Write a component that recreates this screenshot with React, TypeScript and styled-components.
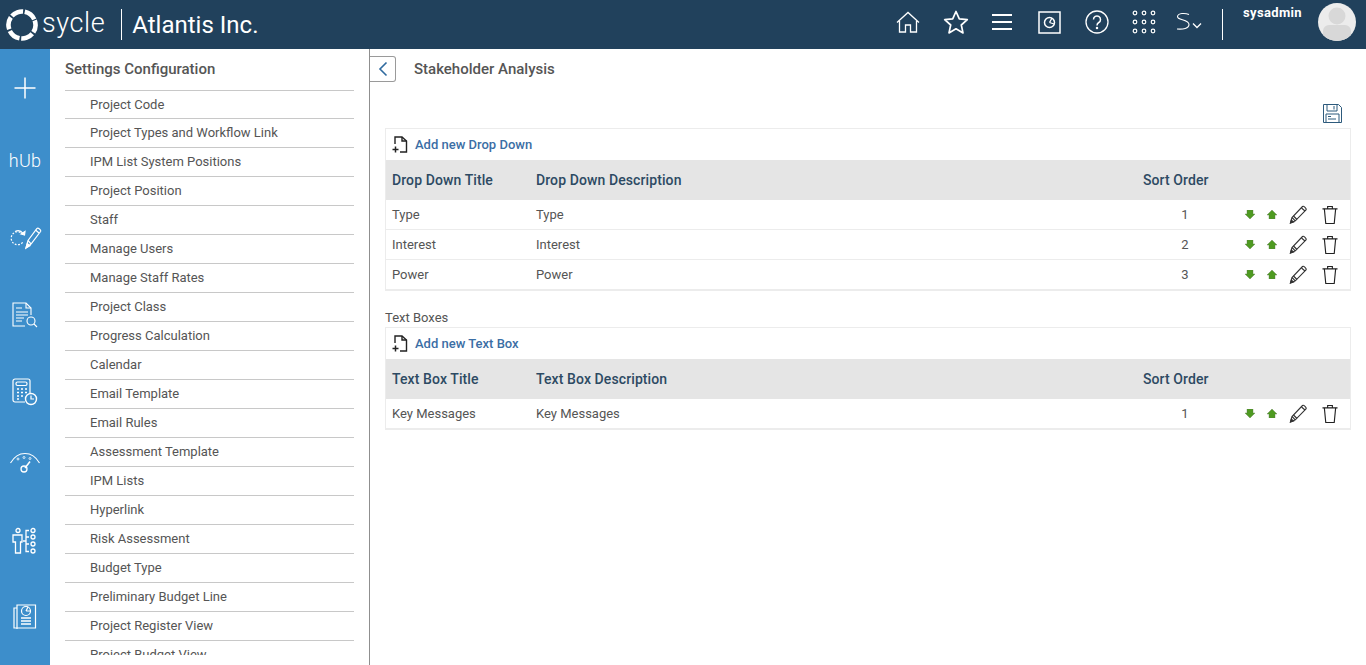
import React from "react";
import styled, { createGlobalStyle } from "styled-components";

const Global = createGlobalStyle`
  html, body { margin: 0; padding: 0; height: 100%; overflow: hidden; background: #fff; }
  body { font-family: Roboto, "Liberation Sans", sans-serif; }
  #root { height: 100%; }
`;

const Page = styled.div`
  width: 1366px;
  height: 665px;
  display: flex;
  flex-direction: column;
  overflow: hidden;
`;
const Header = styled.header`
  height: 49px;
  flex: none;
  background: #21415c;
  display: flex;
  align-items: center;
  color: #fff;
`;
const Brand = styled.div`
  display: flex;
  align-items: center;
  padding-left: 6px;
`;
const LogoText = styled.span`
  font-size: 27px;
  font-weight: 300;
  letter-spacing: 0.6px;
  margin: -3px 0 0 4px;
`;
const BrandRule = styled.span`
  width: 1px;
  height: 31px;
  background: #fff;
  margin: 0 10px 0 16px;
`;
const Company = styled.span`
  font-size: 24px;
  font-weight: 400;
  margin-top: 1px;
`;
const HeaderIcons = styled.div`
  margin-left: auto;
  display: flex;
  align-items: center;
  height: 100%;
`;
const HeaderIcon = styled.span<{ $w: number; $mr: number }>`
  width: ${(p) => p.$w}px;
  margin-right: ${(p) => p.$mr}px;
  margin-bottom: 5px;
  display: flex;
  justify-content: center;
  align-items: center;
`;
const HeaderRule = styled.span`
  width: 1px;
  height: 31px;
  background: #fff;
  align-self: flex-start;
  margin: 9px 20px 0 0;
`;
const UserName = styled.span`
  font-size: 13px;
  font-weight: 700;
  letter-spacing: 0.35px;
  align-self: flex-start;
  margin-top: 5px;
  width: 75px;
`;
const Avatar = styled.span`
  width: 38px;
  height: 38px;
  border-radius: 50%;
  background: #ececec;
  overflow: hidden;
  margin-right: 10px;
  align-self: flex-start;
  margin-top: 3px;
  display: block;
`;
const Body = styled.div`
  flex: 1;
  display: flex;
  min-height: 0;
`;
const Rail = styled.nav`
  width: 50px;
  flex: none;
  background: #3d8ecb;
  display: flex;
  flex-direction: column;
  align-items: center;
  padding-top: 24px;
`;
const RailSlot = styled.div<{ $h: number }>`
  height: ${(p) => p.$h}px;
  flex: none;
`;
const RailIcon = styled.div`
  height: 30px;
  display: flex;
  justify-content: center;
  align-items: center;
`;
const HubText = styled.span`
  color: #fff;
  font-size: 18px;
  font-weight: 300;
  letter-spacing: 0.3px;
  line-height: 20px;
`;
const Sidebar = styled.aside`
  width: 320px;
  box-sizing: border-box;
  flex: none;
  border-right: 1px solid #8f8f8f;
  padding: 0 15px;
  overflow: hidden;
`;
const SideTitle = styled.div`
  font-size: 15px;
  font-weight: 500;
  color: #555;
  line-height: 40px;
  border-bottom: 1px solid #c8c8c8;
  box-sizing: border-box;
  height: 42px;
`;
const SideList = styled.div`
  height: 564px;
  overflow: hidden;
`;
const SideItem = styled.div`
  height: 29px;
  box-sizing: border-box;
  border-bottom: 1px solid #c8c8c8;
  padding-left: 25px;
  font-size: 13px;
  color: #555;
  line-height: 27px;
  white-space: nowrap;
  &:first-child { height: 28px; }
`;
const Main = styled.main`
  flex: 1;
  min-width: 0;
  display: flex;
  flex-direction: column;
  padding-right: 15px;
`;
const TitleBar = styled.div`
  display: flex;
  align-items: center;
  height: 26px;
  margin-top: 7px;
`;
const BackButton = styled.button`
  width: 26px;
  height: 26px;
  box-sizing: border-box;
  padding: 0;
  background: #fff;
  border: 1px solid #9a9a9a;
  border-left: none;
  border-radius: 0 3px 3px 0;
  display: flex;
  align-items: center;
  justify-content: center;
  margin-right: 18px;
`;
const PageTitle = styled.h1`
  margin: 0;
  font-size: 15px;
  font-weight: 500;
  color: #555;
`;
const SaveRow = styled.div`
  display: flex;
  justify-content: flex-end;
  height: 20px;
  margin: 22px 0 3px;
  padding-right: 9px;
`;
const Panel = styled.section`
  margin: 1px 0 0 15px;
  border: 1px solid #ececec;
  border-bottom-width: 2px;
`;
const AddRow = styled.div`
  height: 31px;
  display: flex;
  align-items: center;
  padding-left: 6px;
  gap: 7px;
  font-size: 13px;
  font-weight: 500;
  color: #3b6ea5;
`;
const grid = `
  display: grid;
  grid-template-columns: 144px 1fr 100px 114px;
`;
const HeadRow = styled.div`
  ${grid}
  height: 40px;
  box-sizing: border-box;
  padding-bottom: 1px;
  background: #e5e5e5;
  align-items: center;
  padding-left: 6px;
  font-size: 14px;
  font-weight: 500;
  letter-spacing: 0.1px;
  color: #2d4a63;
`;
const HeadSort = styled.span`
  padding-left: 7px;
  white-space: nowrap;
`;
const Row = styled.div`
  ${grid}
  height: 30px;
  box-sizing: border-box;
  border-bottom: 1px solid #ececec;
  align-items: center;
  padding-left: 6px;
  font-size: 13px;
  color: #555;
  &:last-child { height: 29px; border-bottom: none; }
`;
const SortCell = styled.span`
  text-align: center;
  margin-left: 7px;
  width: 84px;
`;
const Actions = styled.span`
  display: flex;
  align-items: center;
  padding-left: 9px;
`;
const ArrowSlot = styled.span<{ $w: number }>`
  width: ${(p) => p.$w}px;
  display: flex;
  align-items: center;
`;
const SectionLabel = styled.div`
  margin: 19px 0 0 15px;
  font-size: 13px;
  color: #555;
  height: 16px;
  line-height: 16px;
`;

const W = { fill: "none", stroke: "#fff", strokeWidth: 1.3 } as const;

const LogoMark = () => (
  <svg width="32" height="34" viewBox="0 0 32 34">
    <circle
      cx="16"
      cy="17"
      r="13.5"
      fill="none"
      stroke="#fff"
      strokeWidth="4.6"
      strokeDasharray="12.4 1.74"
      transform="rotate(-20 16 17)"
    />
  </svg>
);
const Home = () => (
  <svg width="24" height="22" viewBox="0 0 24 22" {...W}>
    <path d="M1 11.5 12 1.5l11 10M3.5 10v11h6v-7h5v7h6V10" />
  </svg>
);
const Star = () => (
  <svg width="26" height="24" viewBox="0 0 26 24" {...W} strokeWidth="1.7">
    <path d="M13 1.500l3.300 7.300 8 .9-6 5.300 1.700 7.900-7-4.100-7 4.100 1.700-7.900-6-5.300 8-.9z" strokeLinejoin="round" />
  </svg>
);
const Menu = () => (
  <svg width="22" height="18" viewBox="0 0 22 18" stroke="#fff" strokeWidth="2">
    <path d="M1 2h20M1 9h20M1 16h20" />
  </svg>
);
const Dash = () => (
  <svg width="23" height="23" viewBox="0 0 23 23" fill="none" stroke="#fff">
    <rect x="1" y="1" width="21" height="21" strokeWidth="1.500" />
    <circle cx="11.500" cy="11.500" r="5" strokeWidth="1.500" />
    <path d="M11.500 11.500 14 7M11.500 11.500l4.500 1.500" strokeWidth="1.300" />
  </svg>
);
const Help = () => (
  <svg width="24" height="24" viewBox="0 0 24 24" fill="none" stroke="#fff" strokeWidth="1.300">
    <circle cx="12" cy="12" r="11" />
    <path d="M8.500 9.500a3.500 3.500 0 1 1 5.300 3c-1.300.8-1.800 1.300-1.800 3" strokeWidth="1.500" />
    <circle cx="12" cy="18" r=".6" fill="#fff" />
  </svg>
);
const Apps = () => (
  <svg width="24" height="24" viewBox="0 0 24 24" fill="none" stroke="#fff" strokeWidth="1.200">
    {[3, 12, 21].flatMap((y) =>
      [3, 12, 21].map((x) => <circle key={`${x}-${y}`} cx={x} cy={y} r="1.800" />)
    )}
  </svg>
);
const Skin = () => (
  <svg width="28" height="20" viewBox="0 0 28 20" fill="none" stroke="#fff" strokeWidth="1.100">
    <path d="M13 2.500C9 .8 2 1 1.500 4.500 1 8.500 13 7 13 12.500c0 4-6 5-12 4.500" />
    <path d="M17 11.500l4 4 4-4" strokeWidth="1.300" />
  </svg>
);
const Person = () => (
  <svg width="38" height="38" viewBox="0 0 38 38">
    <circle cx="19" cy="13" r="8.500" fill="#d8d8d8" />
    <rect x="5" y="22" width="28" height="16" rx="6" fill="#d8d8d8" />
  </svg>
);

const Plus = () => (
  <svg width="24" height="24" viewBox="0 0 24 24" stroke="#fff" strokeWidth="1.500">
    <path d="M12 1.500v21M1.500 12h21" />
  </svg>
);
const Cycle = () => (
  <svg width="34" height="24" viewBox="0 0 34 24" fill="none" stroke="#fff" strokeWidth="1.200">
    <path d="M15 8.500A6.500 6.500 0 1 0 15 16" strokeDasharray="1.800 1.500" />
    <path d="M7 5.500c3-1.500 6-1 8 2" />
    <path d="M13 8l3.500 1L17 5.500z" fill="#fff" />
    <path d="M18 22l2-7.500L29 2.500c1-1 4.300 1.200 3.700 2.800L23 18z" />
    <path d="M20 14.500l3 3.500M27.500 4l3.500 3" />
    <path d="M18 22l1.300-4.500 2.700 2.200z" fill="#fff" />
  </svg>
);
const DocSearch = () => (
  <svg width="26" height="26" viewBox="0 0 26 26" fill="none" stroke="#fff" strokeWidth="1.100">
    <path d="M19 13V6l-5-5H1v23h12" />
    <path d="M14 1v5h5" />
    <path d="M4 6h6M4 10h12M4 13h12M4 16h8M4 19h6" />
    <circle cx="19" cy="19" r="4" />
    <path d="M22 22l3 3" />
  </svg>
);
const Calc = () => (
  <svg width="26" height="28" viewBox="0 0 26 28" fill="none" stroke="#fff" strokeWidth="1.200">
    <path d="M13 24H3a2 2 0 0 1-2-2V3a2 2 0 0 1 2-2h13a2 2 0 0 1 2 2v12" />
    <rect x="4" y="4" width="11" height="3.500" rx="1.500" />
    <path d="M5 11h2M9 11h2M13 11h2M5 14.500h2M9 14.500h2M13 14.500h2M5 18h2M9 18h2M5 21h2" strokeWidth="1.400" />
    <circle cx="19" cy="21" r="5.500" strokeWidth="1.400" />
    <path d="M19 17.500V21h3" />
  </svg>
);
const Gauge = () => (
  <svg width="30" height="21" viewBox="0 0 30 21" fill="none" stroke="#fff" strokeWidth="1.100">
    <path d="M.5 11C4 5 9 1.500 15 1.500S26 5 29.500 11" />
    <circle cx="8" cy="7" r="1" strokeWidth=".8" /><circle cx="14" cy="5.500" r="1" strokeWidth=".8" /><circle cx="20" cy="6.500" r="1" strokeWidth=".8" />
    <circle cx="14" cy="17" r="3" strokeWidth="1.300" />
    <path d="M15 16l5-6.500" strokeWidth="1.500" />
  </svg>
);
const Org = () => (
  <svg width="26" height="28" viewBox="0 0 26 28" fill="none" stroke="#fff" strokeWidth="1.300">
    <circle cx="6" cy="3.500" r="2" />
    <path d="M1 8h9v7H8.500v11h-5V15H1z" />
    <path d="M11 14h3M17 3.500h-3v21h3M14 10h3M14 17h3" />
    <circle cx="21" cy="3.500" r="2" /><circle cx="21" cy="10" r="2" /><circle cx="21" cy="17" r="2" /><circle cx="21" cy="24" r="2" />
  </svg>
);
const Report = () => (
  <svg width="24" height="28" viewBox="0 0 24 28" fill="none" stroke="#fff" strokeWidth="1.200">
    <path d="M4 26V2h18.500v23H1V5h3" />
    <circle cx="13" cy="8" r="4.500" />
    <path d="M13 8l2-4M13 8h4.500" />
    <path d="M8 15h10M8 18h10M8 21h10" strokeWidth="1.500" />
  </svg>
);

const Chevron = () => (
  <svg width="12" height="16" viewBox="0 0 12 16" fill="none" stroke="#2f6a9f" strokeWidth="1.600">
    <path d="M9.500 1.500 3 8l6.500 6.500" />
  </svg>
);
const Save = () => (
  <svg width="19" height="19" viewBox="0 0 19 19" fill="none" stroke="#2d5a7c" strokeWidth="1">
    <path d="M.5.500h15l3 3v15H.5z" />
    <path d="M4 .5v6.500h10V.5M11 2v3.500" />
    <path d="M3 18.500V10h13v8.500M5 12.500h3M5 15h8" />
  </svg>
);
const AddFile = () => (
  <svg width="16" height="17" viewBox="0 0 16 17" fill="none" stroke="#222" strokeWidth="1.400">
    <path d="M3 8V1h7l4.500 4v11H8" />
    <path d="M10 1v4h4.500" />
    <path d="M3.500 10.500v6M.5 13.500h6" strokeWidth="1.500" />
  </svg>
);
const Down = () => (
  <svg width="10" height="9" viewBox="0 0 10 9">
    <path d="M2 0h6v4h2L5 9 0 4h2z" fill="#4e9a21" stroke="#5d7a4a" strokeWidth=".4" />
  </svg>
);
const Up = () => (
  <svg width="10" height="9" viewBox="0 0 10 9">
    <path d="M2 9h6V5h2L5 0 0 5h2z" fill="#4e9a21" stroke="#5d7a4a" strokeWidth=".4" />
  </svg>
);
const Pencil = () => (
  <svg width="19" height="19" viewBox="0 0 18 19" fill="none" stroke="#333" strokeWidth="1.100">
    <path d="M1 18l1.500-5.500L13 1.500c1-1 4.500 2 3.500 3.500L5.800 15.800z" />
    <path d="M2.500 12.500l3.300 3.300M4 11l3.500 3.500M12 3l3.500 3" />
    <path d="M1 18l.8-3 2.200 2z" fill="#333" />
  </svg>
);
const Trash = () => (
  <svg width="16" height="20" viewBox="0 0 17 20" fill="none" stroke="#222" strokeWidth="1.200">
    <path d="M.5 3.500h16M6 3.500V1h5v2.500" />
    <path d="M2.500 3.500 4 19h9l1.500-15.500" />
  </svg>
);

const menu = [
  "Project Code", "Project Types and Workflow Link", "IPM List System Positions", "Project Position",
  "Staff", "Manage Users", "Manage Staff Rates", "Project Class", "Progress Calculation", "Calendar",
  "Email Template", "Email Rules", "Assessment Template", "IPM Lists", "Hyperlink", "Risk Assessment",
  "Budget Type", "Preliminary Budget Line", "Project Register View", "Project Budget View",
];
const rail = [
  { h: 72.5, icon: <Plus /> },
  { h: 77, icon: <HubText>hUb</HubText> },
  { h: 77.5, icon: <Cycle /> },
  { h: 76.5, icon: <DocSearch /> },
  { h: 71, icon: <Calc /> },
  { h: 78, icon: <Gauge /> },
  { h: 76, icon: <Org /> },
  { h: 50, icon: <Report /> },
];

type TableProps = { add: string; first: string; second: string; rows: string[] };
const Table = ({ add, first, second, rows }: TableProps) => (
  <Panel>
    <AddRow><AddFile />{add}</AddRow>
    <HeadRow>
      <span>{first}</span>
      <span>{second}</span>
      <HeadSort>Sort Order</HeadSort>
      <span />
    </HeadRow>
    {rows.map((r, i) => (
      <Row key={r}>
        <span>{r}</span>
        <span>{r}</span>
        <SortCell>{i + 1}</SortCell>
        <Actions>
          <ArrowSlot $w={22}><Down /></ArrowSlot>
          <ArrowSlot $w={22}><Up /></ArrowSlot>
          <ArrowSlot $w={33}><Pencil /></ArrowSlot>
          <ArrowSlot $w={18}><Trash /></ArrowSlot>
        </Actions>
      </Row>
    ))}
  </Panel>
);

export default function App() {
  return (
    <Page>
      <Global />
      <Header>
        <Brand>
          <LogoMark />
          <LogoText>sycle</LogoText>
          <BrandRule />
          <Company>Atlantis Inc.</Company>
        </Brand>
        <HeaderIcons>
          <HeaderIcon $w={24} $mr={23}><Home /></HeaderIcon>
          <HeaderIcon $w={26} $mr={22}><Star /></HeaderIcon>
          <HeaderIcon $w={22} $mr={25}><Menu /></HeaderIcon>
          <HeaderIcon $w={23} $mr={24}><Dash /></HeaderIcon>
          <HeaderIcon $w={24} $mr={23}><Help /></HeaderIcon>
          <HeaderIcon $w={24} $mr={20}><Apps /></HeaderIcon>
          <HeaderIcon $w={28} $mr={18}><Skin /></HeaderIcon>
          <HeaderRule />
          <UserName>sysadmin</UserName>
          <Avatar><Person /></Avatar>
        </HeaderIcons>
      </Header>
      <Body>
        <Rail>
          {rail.map((r, i) => (
            <RailSlot key={i} $h={r.h}><RailIcon>{r.icon}</RailIcon></RailSlot>
          ))}
        </Rail>
        <Sidebar>
          <SideTitle>Settings Configuration</SideTitle>
          <SideList>
            {menu.map((m) => <SideItem key={m}>{m}</SideItem>)}
          </SideList>
        </Sidebar>
        <Main>
          <TitleBar>
            <BackButton aria-label="Back"><Chevron /></BackButton>
            <PageTitle>Stakeholder Analysis</PageTitle>
          </TitleBar>
          <SaveRow><Save /></SaveRow>
          <Table add="Add new Drop Down" first="Drop Down Title" second="Drop Down Description" rows={["Type", "Interest", "Power"]} />
          <SectionLabel>Text Boxes</SectionLabel>
          <Table add="Add new Text Box" first="Text Box Title" second="Text Box Description" rows={["Key Messages"]} />
        </Main>
      </Body>
    </Page>
  );
}
